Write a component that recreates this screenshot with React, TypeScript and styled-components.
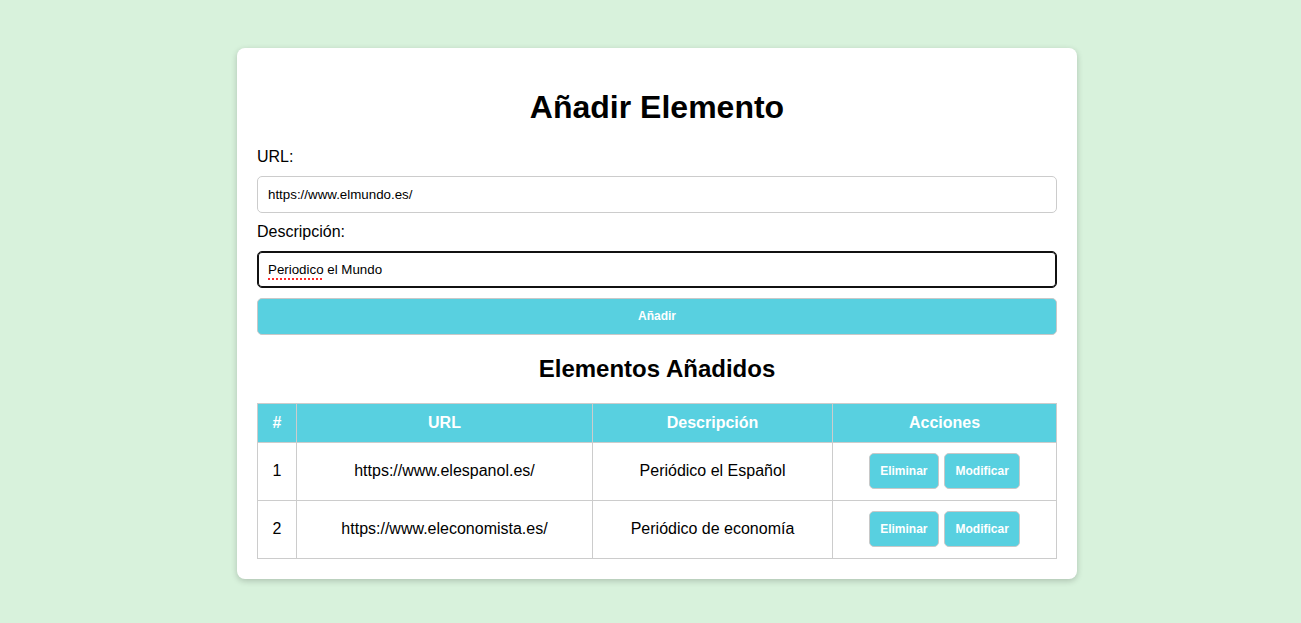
import React from "react";
import styled, { createGlobalStyle } from "styled-components";

const Global = createGlobalStyle`
  html, body { margin: 0; padding: 0; }
  body {
    background: #d8f2dc;
    font-family: "Liberation Sans", Arial, sans-serif;
    color: #000;
    min-height: 623px;
  }
`;

const Page = styled.div`
  display: flex;
  justify-content: center;
  padding: 48px 0 0 13px;
`;

const Card = styled.div`
  width: 800px;
  background: #fff;
  padding: 20px;
  border-radius: 8px;
  box-shadow: 0 2px 6px rgba(0, 0, 0, 0.2);
`;

const Title = styled.h1`
  font-size: 32px;
  font-weight: bold;
  text-align: center;
  margin: 21.44px 0;
`;

const Subtitle = styled.h2`
  font-size: 24px;
  font-weight: bold;
  text-align: center;
  margin: 19.92px 0;
`;

const Label = styled.label`
  display: block;
  font-size: 16px;
  margin-bottom: 10px;
`;

const Input = styled.input`
  display: block;
  box-sizing: border-box;
  width: 100%;
  height: 37px;
  padding: 10px;
  margin-bottom: 10px;
  font-family: "Liberation Sans", Arial, sans-serif;
  font-size: 13.33px;
  color: #000;
  border: 1px solid #ccc;
  border-radius: 5px;
  outline: none;
`;

const Misspelled = styled.span`
  display: inline-block;
  position: relative;
  &::after {
    content: "";
    position: absolute;
    left: 0;
    right: 0;
    bottom: -3px;
    height: 2px;
    background-image: repeating-linear-gradient(
      to right,
      #ff2a2a 0 2px,
      transparent 2px 4px
    );
  }
`;

const FakeInput = styled.div<{ $focused?: boolean }>`
  box-sizing: border-box;
  width: 100%;
  height: 37px;
  padding: 10px;
  margin-bottom: 10px;
  font-size: 13.33px;
  line-height: 15px;
  border: 1px solid ${(p) => (p.$focused ? "#111" : "#ccc")};
  box-shadow: ${(p) => (p.$focused ? "inset 0 0 0 1px #111" : "none")};
  border-radius: 5px;
`;

const Button = styled.button<{ $block?: boolean }>`
  box-sizing: border-box;
  display: ${(p) => (p.$block ? "block" : "inline-block")};
  width: ${(p) => (p.$block ? "100%" : "auto")};
  height: ${(p) => (p.$block ? "37px" : "36px")};
  padding: 0 10.5px;
  background: #58d0e0;
  color: #fff;
  font-family: "Liberation Sans", Arial, sans-serif;
  font-size: 12px;
  font-weight: bold;
  border: 1px solid #c8c8c8;
  border-radius: 5px;
  cursor: pointer;
`;

const Table = styled.table`
  width: 799px;
  border-collapse: collapse;
  table-layout: fixed;
  font-size: 16px;
`;

const Th = styled.th`
  background: #58d0e0;
  color: #fff;
  font-weight: bold;
  height: 18px;
  padding: 10px;
  border: 1px solid #ccc;
  text-align: center;
`;

const Td = styled.td`
  height: 37px;
  padding: 10px;
  border: 1px solid #ccc;
  text-align: center;
  vertical-align: middle;
`;

const Actions = styled.div`
  display: flex;
  justify-content: center;
  gap: 5px;
`;

const rows = [
  { url: "https://www.elespanol.es/", desc: "Periódico el Español" },
  { url: "https://www.eleconomista.es/", desc: "Periódico de economía" },
];

export default function App() {
  return (
    <>
      <Global />
      <Page>
        <Card>
          <Title>Añadir Elemento</Title>
          <Label>URL:</Label>
          <Input defaultValue="https://www.elmundo.es/" readOnly />
          <Label>Descripción:</Label>
          <FakeInput $focused>
            <Misspelled>Periodico</Misspelled> el Mundo
          </FakeInput>
          <Button $block>Añadir</Button>
          <Subtitle>Elementos Añadidos</Subtitle>
          <Table>
            <colgroup>
              <col style={{ width: 39 }} />
              <col style={{ width: 296 }} />
              <col style={{ width: 240 }} />
              <col style={{ width: 224 }} />
            </colgroup>
            <thead>
              <tr>
                <Th>#</Th>
                <Th>URL</Th>
                <Th>Descripción</Th>
                <Th>Acciones</Th>
              </tr>
            </thead>
            <tbody>
              {rows.map((r, i) => (
                <tr key={i}>
                  <Td>{i + 1}</Td>
                  <Td>{r.url}</Td>
                  <Td>{r.desc}</Td>
                  <Td>
                    <Actions>
                      <Button>Eliminar</Button>
                      <Button>Modificar</Button>
                    </Actions>
                  </Td>
                </tr>
              ))}
            </tbody>
          </Table>
        </Card>
      </Page>
    </>
  );
}
